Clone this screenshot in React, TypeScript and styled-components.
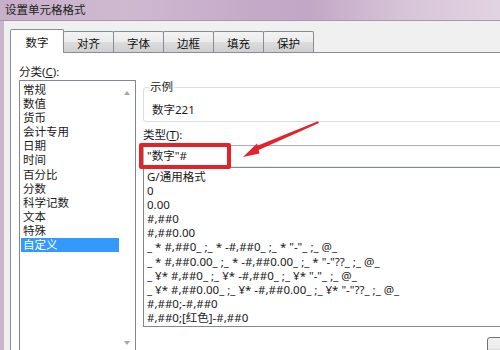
import styled, { createGlobalStyle, css } from "styled-components";

const FONT = `"Noto Sans", "Noto Sans CJK SC", sans-serif`;

const GlobalStyle = createGlobalStyle`
    html, body {
        margin: 0;
        padding: 0;
    }
    body {
        width: 500px;
        height: 350px;
        overflow: hidden;
        font-family: ${FONT};
        font-size: 11.5px;
        color: #1a1a1a;
    }
`;

const tabs = ["数字", "对齐", "字体", "边框", "填充", "保护"];

const categories = [
    "常规",
    "数值",
    "货币",
    "会计专用",
    "日期",
    "时间",
    "百分比",
    "分数",
    "科学记数",
    "文本",
    "特殊",
    "自定义",
];

const formats = [
    "G/通用格式",
    "0",
    "0.00",
    "#,##0",
    "#,##0.00",
    '_ * #,##0_ ;_ * -#,##0_ ;_ * "-"_ ;_ @_ ',
    '_ * #,##0.00_ ;_ * -#,##0.00_ ;_ * "-"??_ ;_ @_ ',
    '_ ¥* #,##0_ ;_ ¥* -#,##0_ ;_ ¥* "-"_ ;_ @_ ',
    '_ ¥* #,##0.00_ ;_ ¥* -#,##0.00_ ;_ ¥* "-"??_ ;_ @_ ',
    "#,##0;-#,##0",
    "#,##0;[红色]-#,##0",
];

export default function App() {
    return (
        <>
            <GlobalStyle />
            <Window>
                <TitleBar>设置单元格格式</TitleBar>
                <Frame>
                    <Body>
                        <TabStrip>
                            {tabs.map((t, i) => (
                                <Tab key={t} $active={i === 0}>
                                    {t}
                                </Tab>
                            ))}
                        </TabStrip>
                        <Panel>
                            <LeftColumn>
                                <Label>
                                    分类(<u>C</u>):
                                </Label>
                                <ListBox>
                                    <Items>
                                        {categories.map((c) => (
                                            <CategoryItem key={c} $selected={c === "自定义"}>
                                                {c}
                                            </CategoryItem>
                                        ))}
                                    </Items>
                                    <ScrollBar>
                                        <Arrow $dir="up" />
                                        <Arrow $dir="down" />
                                    </ScrollBar>
                                </ListBox>
                            </LeftColumn>
                            <RightColumn>
                                <GroupBox>
                                    <Legend>示例</Legend>
                                    <Sample>数字221</Sample>
                                </GroupBox>
                                <TypeLabel>
                                    类型(<u>T</u>):
                                </TypeLabel>
                                <FormatInput>"数字"#</FormatInput>
                                <FormatList>
                                    {formats.map((f) => (
                                        <FormatItem key={f}>{f}</FormatItem>
                                    ))}
                                </FormatList>
                                <ButtonRow>
                                    <Button />
                                </ButtonRow>
                            </RightColumn>
                            <Highlight />
                            <Pointer viewBox="0 0 90 50" width="90" height="50">
                                <polygon points="83,6.2 84,8 22.5,35.5 20.5,31.5" fill="#e3232a" />
                                <polygon points="8,42 22,28.5 24.5,38.5" fill="#e3232a" />
                            </Pointer>
                        </Panel>
                    </Body>
                </Frame>
            </Window>
        </>
    );
}

const Window = styled.div`
    display: flex;
    flex-direction: column;
    width: 500px;
    height: 350px;
    background: #c9b6ca;
    overflow: hidden;
`;

const TitleBar = styled.div`
    height: 20px;
    flex: none;
    padding-left: 5px;
    line-height: 19px;
    font-size: 11.5px;
    color: #1e1e1e;
    border-bottom: 1px solid #a896aa;
    background: linear-gradient(
        90deg,
        #c7afca 0%,
        #cfb9d1 25%,
        #c5aac8 50%,
        #c3a7c6 62%,
        #d6c3d7 80%,
        #e2d3e2 100%
    );
`;

const Frame = styled.div`
    flex: 1;
    display: flex;
    padding-left: 4px;
    min-height: 0;
`;

const Body = styled.div`
    flex: 1;
    display: flex;
    flex-direction: column;
    background: #f0f0f0;
    padding: 8px 0 0 6px;
    min-width: 0;
`;

const TabStrip = styled.div`
    display: flex;
    align-items: flex-end;
    height: 23px;
    flex: none;
`;

const Tab = styled.div<{ $active?: boolean }>`
    box-sizing: border-box;
    display: flex;
    align-items: center;
    justify-content: center;
    border: 1px solid #898c95;
    border-bottom: none;
    border-radius: 2px 2px 0 0;
    font-size: 11.5px;
    color: #111;
    margin-left: -1px;
    ${({ $active }) =>
        $active
            ? css`
                  width: 54px;
                  height: 24px;
                  margin-left: 0;
                  margin-bottom: -1px;
                  padding-top: 0;
                  background: #fff;
                  position: relative;
                  z-index: 1;
              `
            : css`
                  width: 51px;
                  height: 21px;
                  padding-top: 1px;
                  background: linear-gradient(#f3f3f3, #ebebeb 50%, #dddddd 51%, #cfcfcf);
              `}
`;

const Panel = styled.div`
    position: relative;
    flex: 1;
    display: grid;
    grid-template-columns: 117px 420px;
    column-gap: 7px;
    align-items: start;
    background: #fff;
    border-top: 1px solid #898c95;
    border-left: 1px solid #898c95;
    padding: 10px 0 0 8px;
`;

const LeftColumn = styled.div`
    display: flex;
    flex-direction: column;
`;

const Label = styled.div`
    height: 17px;
    line-height: 17px;
    font-size: 11.5px;
`;

const ListBox = styled.div`
    box-sizing: border-box;
    display: flex;
    height: 272px;
    border: 1px solid #828790;
`;

const Items = styled.div`
    width: 98px;
    padding: 2px 0 0 1px;
`;

const CategoryItem = styled.div<{ $selected?: boolean }>`
    height: 14.1px;
    line-height: 14.1px;
    padding-left: 2px;
    font-size: 11.5px;
    white-space: nowrap;
    ${({ $selected }) =>
        $selected &&
        css`
            background: #3399ff;
            color: #fff;
        `}
`;

const ScrollBar = styled.div`
    flex: 1;
    display: flex;
    flex-direction: column;
    justify-content: space-between;
    align-items: center;
    padding: 10px 0 6px;
`;

const Arrow = styled.div<{ $dir: "up" | "down" }>`
    width: 0;
    height: 0;
    border-left: 3.5px solid transparent;
    border-right: 3.5px solid transparent;
    ${({ $dir }) =>
        $dir === "up"
            ? css`
                  border-bottom: 4px solid #a6a6a6;
              `
            : css`
                  border-top: 4px solid #a6a6a6;
              `}
`;

const RightColumn = styled.div`
    display: flex;
    flex-direction: column;
    margin-top: 17px;
`;

const GroupBox = styled.fieldset`
    margin: 0;
    padding: 0 8px 4px;
    border: 1px solid #d5dfe5;
    border-radius: 3px;
`;

const Legend = styled.legend`
    padding: 0 1px;
    margin-left: -3px;
    line-height: 14px;
    font-size: 11.5px;
`;

const Sample = styled.div`
    padding-top: 9px;
    line-height: 14px;
    font-size: 11.5px;
`;

const TypeLabel = styled(Label)`
    margin-top: 4px;
`;

const FormatInput = styled.div`
    box-sizing: border-box;
    margin-top: 2px;
    height: 22px;
    line-height: 20px;
    padding-left: 3px;
    border: 1px solid #abadb3;
    border-bottom-color: #e3e9ef;
    font-size: 11.5px;
`;

const FormatList = styled.div`
    box-sizing: border-box;
    height: 160px;
    padding: 2px 0 0 3px;
    border: 1px solid #828790;
`;

const FormatItem = styled.div`
    height: 14.1px;
    line-height: 14.1px;
    white-space: pre;
    font-size: 11.5px;
`;

const ButtonRow = styled.div`
    display: flex;
    justify-content: flex-end;
    margin-top: 10px;
`;

const Button = styled.div`
    width: 74px;
    height: 22px;
    border: 1px solid #707070;
    border-radius: 3px;
    background: linear-gradient(#f2f2f2, #ebebeb 50%, #dddddd 51%, #cfcfcf);
`;

const Highlight = styled.div`
    position: absolute;
    left: 128px;
    top: 90px;
    width: 92px;
    height: 26px;
    box-sizing: border-box;
    border: 4px solid #e3232a;
    border-radius: 2px;
    pointer-events: none;
`;

const Pointer = styled.svg`
    position: absolute;
    left: 224px;
    top: 62px;
    pointer-events: none;
`;
